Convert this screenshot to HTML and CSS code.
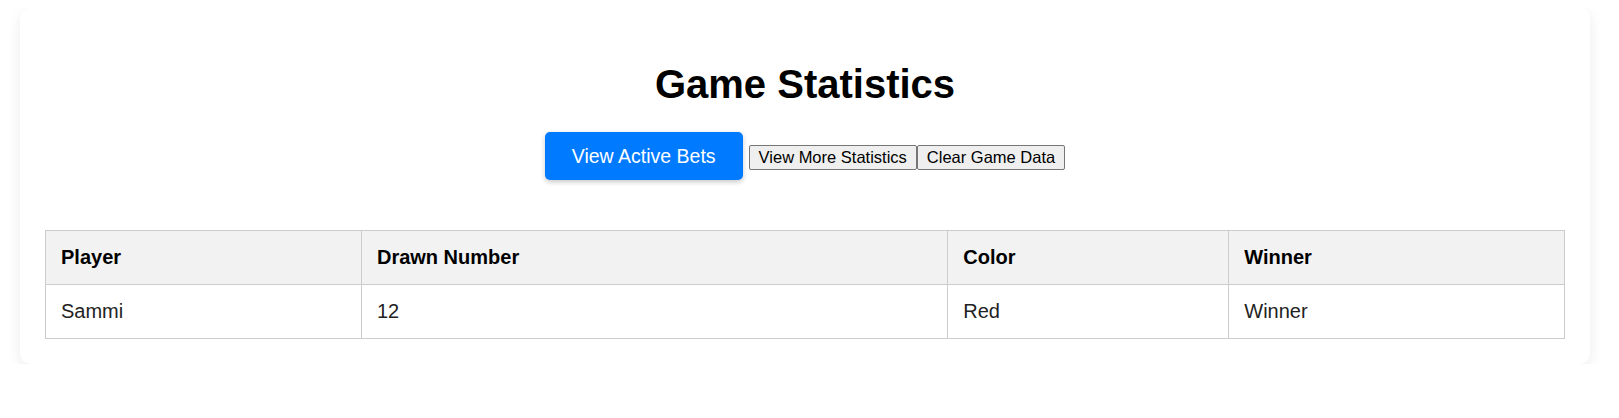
FILE: index.html
```html
<!DOCTYPE html>
<html lang="en">
<head>
<meta charset="utf-8">
<title>Game Statistics</title>
<link rel="stylesheet" href="styles.css">
</head>
<body>
  <div class="card">
    <h1 class="title">Game Statistics</h1>
    <div class="actions"><button class="btn-primary">View Active Bets</button><button class="btn-plain">View More Statistics</button><button class="btn-plain">Clear Game Data</button></div>
    <table class="stats">
      <colgroup>
        <col class="col-player">
        <col class="col-number">
        <col class="col-color">
        <col class="col-winner">
      </colgroup>
      <thead>
        <tr>
          <th>Player</th>
          <th>Drawn Number</th>
          <th>Color</th>
          <th>Winner</th>
        </tr>
      </thead>
      <tbody>
        <tr>
          <td>Sammi</td>
          <td>12</td>
          <td>Red</td>
          <td>Winner</td>
        </tr>
      </tbody>
    </table>
  </div>
</body>
</html>
```

FILE: styles.css
```css
html, body {
  background: #ffffff;
}

body {
  margin: 8px;
  font-family: "Liberation Sans", Arial, sans-serif;
  font-size: 19.5px;
  color: #222;
}

.card {
  margin: 0 21px 0 12px;
  padding: 25px;
  background: #fff;
  border-radius: 10px;
  box-shadow: 0 4px 14px rgba(0, 0, 0, 0.08);
}

.title {
  margin: 28px 0 25px;
  text-align: center;
  font-size: 40px;
  font-weight: bold;
  color: #000;
  line-height: 1.15;
}

.actions {
  text-align: center;
  margin-bottom: 50px;
}

.btn-primary {
  font-family: "Liberation Sans", Arial, sans-serif;
  font-size: 19.5px;
  line-height: 1.15;
  color: #fff;
  background: #007bff;
  border: none;
  border-radius: 5px;
  padding: 13px 27px;
  margin: 0 6px 0 0;
  box-shadow: 0 2px 5px rgba(0, 0, 0, 0.22);
  cursor: pointer;
}

.btn-plain {
  font-family: "Liberation Sans", Arial, sans-serif;
  font-size: 16.5px;
  line-height: 1.15;
  color: #000;
  background: #efefef;
  border: 1px solid #767676;
  border-radius: 2px;
  padding: 2px 9px;
  margin: 0;
  cursor: pointer;
}

.stats {
  width: 100%;
  border-collapse: collapse;
  table-layout: fixed;
}

.col-player { width: 20.8%; }
.col-number { width: 38.6%; }
.col-color { width: 18.5%; }
.col-winner { width: 22.1%; }

.stats th,
.stats td {
  border: 1px solid #cccccc;
  padding: 15px;
  text-align: left;
  font-size: 20px;
  line-height: 1.15;
}

.stats th {
  background: #f2f2f2;
  font-weight: bold;
  color: #000;
}
```
